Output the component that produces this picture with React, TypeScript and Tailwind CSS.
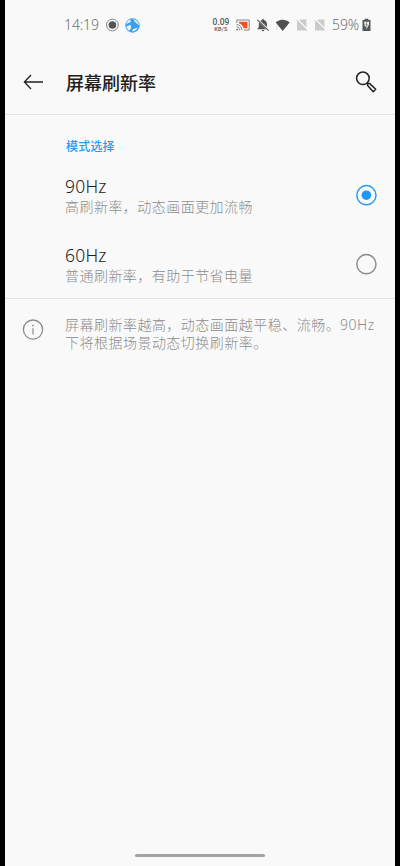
import React, { useState } from 'react';

const modes = [
  { id: '90', name: '90Hz', desc: '高刷新率，动态画面更加流畅' },
  { id: '60', name: '60Hz', desc: '普通刷新率，有助于节省电量' },
];

const NoSim = () => (
  <svg width="11" height="12" viewBox="0 0 11 12" className="shrink-0">
    <path d="M4.2 0.5H10.4V11.5H1V3.4Z" fill="#cbcbcb" />
    <path d="M1.2 0L11.6 10.6" stroke="#f9f9f9" strokeWidth="1.3" />
    <path d="M0.3 0.9L10.7 11.7" stroke="#c4c4c4" strokeWidth="1" />
  </svg>
);

const StatusBar = () => (
  <div className="flex h-[50px] items-center pl-[59px] font-['Noto_Sans',sans-serif] text-[#6f6f6f]">
    <span className="w-[35px] text-[14px] leading-none font-light tracking-[-0.1px] whitespace-nowrap">14:19</span>
    <svg width="14" height="14" viewBox="0 0 14 14" className="ml-[6px] shrink-0">
      <circle cx="7.4" cy="7" r="5.9" fill="none" stroke="#777" strokeWidth="0.9" />
      <circle cx="7.4" cy="7" r="3.8" fill="#555" />
    </svg>
    <svg width="15" height="15" viewBox="0 0 15 15" className="ml-[6px] shrink-0">
      <circle cx="7.5" cy="7.5" r="7.2" fill="#3a9fee" />
      <path d="M1.3 6.4C1.8 3.6 3.4 2 5.4 1.5L5.7 4.2C3.8 4.6 2.4 5.4 1.3 6.4Z" fill="#e8f5ff" />
      <path d="M8 1.3C11.4 1.6 13.8 4.2 13.8 7.2L10.6 4.4C9.8 3.4 8.8 2.2 8 1.3Z" fill="#e8f5ff" />
      <path d="M1.4 8.6L5.4 6.8L6.2 9.6L4.6 12.8C2.8 12 1.6 10.5 1.4 8.6Z" fill="#e8f5ff" />
      <path d="M7.6 11.6L12.8 9.6C11.8 12 9.8 13.4 7.4 13.4Z" fill="#e8f5ff" />
    </svg>
    <div className="ml-[72px] flex w-[18px] flex-col items-center font-[Roboto,sans-serif] font-medium">
      <span className="text-[8.5px] leading-[8px] text-[#555]">0.09</span>
      <span className="text-[5.5px] leading-[6px] font-bold tracking-[0.3px]">KB/S</span>
    </div>
    <svg width="14" height="12" viewBox="0 0 14 12" className="ml-[6px] shrink-0">
      <path d="M0.8 4V1H13.2V11H8" fill="none" stroke="#888" strokeWidth="1" />
      <path d="M3 2.8H11.4V9.2H7.6C7 6.8 5.4 5 3 4.2Z" fill="#f4511e" />
      <path d="M0.5 5.5C3.6 5.5 6 8 6 11.2M0.5 7.7C2.3 7.7 3.8 9.2 3.8 11.2" fill="none" stroke="#777" strokeWidth="0.9" />
      <circle cx="1.2" cy="10.5" r="0.9" fill="#777" />
    </svg>
    <svg width="14" height="14" viewBox="0 0 14 14" className="ml-[6px] shrink-0">
      <path d="M4.3 3C5 2.3 5.7 2 6.2 1.9V1.2Q7 0.2 7.8 1.2V1.9C9.9 2.4 11 4.2 11 6V9L4.3 3Z M3.1 4.4C2.8 5 2.8 5.5 2.8 6V9.2L1.5 10.6V11.2H10.2Z M5.6 11.9H8.4Q8.2 13.2 7 13.2Q5.8 13.2 5.6 11.9Z" fill="#555" />
      <path d="M1.3 1.8L12.6 12.7" stroke="#555" strokeWidth="1.1" />
    </svg>
    <svg width="15" height="14" viewBox="0 0 15 14" className="ml-[5px] shrink-0">
      <path d="M0.7 4.4C4.4 0.9 10.9 0.9 14.6 4.4L7.7 12.9Z" fill="#505050" />
      <path d="M1.8 8V9.5M1.8 10.5V12" stroke="#ccc" strokeWidth="1" />
    </svg>
    <div className="ml-[6px] flex gap-[7px]">
      <NoSim />
      <NoSim />
    </div>
    <span className="ml-[7px] w-[26px] text-[14px] leading-none font-light tracking-[-0.1px] whitespace-nowrap">59%</span>
    <svg width="9" height="14" viewBox="0 0 9 14" className="ml-[4px] shrink-0">
      <path d="M2.6 0.8H6.4V2H8.5V13H0.5V2H2.6Z" fill="#555" />
      <path d="M2 3.8H7V6.6L4.4 11.4V8.4H2.8Z" fill="#f4f4f4" />
      <path d="M5 4L3.9 6.6H5.2L4.5 8.6" fill="none" stroke="#555" strokeWidth="0.7" />
    </svg>
  </div>
);

const Radio = ({ checked }: { checked: boolean }) => (
  <svg width="22" height="22" viewBox="0 0 22 22" className="mb-[1px] shrink-0">
    <circle cx="11.4" cy="11.2" r="9.6" fill="none" stroke={checked ? '#2b9aea' : '#8c8c8c'} strokeWidth="1.5" />
    {checked && <circle cx="11.4" cy="11.2" r="4.8" fill="#2196f3" />}
  </svg>
);

export default function App() {
  const [mode, setMode] = useState('90');

  return (
    <div className="h-[866px] w-[400px] bg-black px-[5px] font-['Noto_Sans','Noto_Sans_CJK_SC',sans-serif]">
      <div className="flex h-full flex-col bg-[#f9f9f9]">
        <StatusBar />

        <header className="flex h-[65px] items-center border-b border-[#e4e4e4] pl-[18px]">
          <svg width="20" height="16" viewBox="0 0 20 16" fill="none" stroke="#222" strokeWidth="1.3" className="shrink-0">
            <path d="M8 1L1.4 8L8 15M1.4 8H20" />
          </svg>
          <h1 className="ml-[23px] flex-1 pt-[1px] text-[18px] leading-6 font-medium text-[#202020]">屏幕刷新率</h1>
          <svg width="22" height="22" viewBox="0 0 22 22" fill="none" stroke="#222" strokeWidth="1.5" className="mr-[18px] shrink-0">
            <circle cx="7.9" cy="7.3" r="6.3" />
            <path d="M12.2 11.8L13.2 12.9" />
            <path d="M12.6 14.6V12.6H14.8L20.7 18.2L18.2 20.8Z" strokeLinejoin="round" />
          </svg>
        </header>

        <section className="h-[184px] border-b border-[#e4e4e4] pr-[18px] pl-[61px]">
          <h2 className="pt-[22px] text-[12px] leading-5 font-medium tracking-[0.2px] text-[#2b9aea]">模式选择</h2>
          <div className="pt-[4px]">
            {modes.map((m) => (
              <div key={m.id} className="flex h-[69px] items-center" onClick={() => setMode(m.id)}>
                <div className="flex-1 pt-[2px]">
                  <div className="-ml-px text-[17.5px] leading-[20px] font-[350] tracking-[0.2px] text-[#222]">{m.name}</div>
                  <div className="-ml-px pt-px text-[14px] leading-[20px] font-light tracking-[0.46px] text-[#8c8c8c]">{m.desc}</div>
                </div>
                <Radio checked={mode === m.id} />
              </div>
            ))}
          </div>
        </section>

        <section className="flex pt-[17px] pl-[17px]">
          <svg width="22" height="22" viewBox="0 0 22 22" fill="none" stroke="#8c8c8c" className="mt-[3px] shrink-0">
            <circle cx="11" cy="10.6" r="9.6" strokeWidth="1.3" />
            <path d="M11 9.2V15.4" strokeWidth="1.2" />
            <circle cx="11" cy="6.6" r="0.9" fill="#8c8c8c" stroke="none" />
          </svg>
          <p className="ml-[21px] text-[14px] leading-[18px] font-light tracking-[0.48px] whitespace-nowrap text-[#8c8c8c]">
            屏幕刷新率越高，动态画面越平稳、流畅。90Hz
            <br />
            下将根据场景动态切换刷新率。
          </p>
        </section>

        <div className="mx-auto mt-auto mb-[9px] h-[3px] w-[130px] rounded-full bg-[#a3a3a3]" />
      </div>
    </div>
  );
}
